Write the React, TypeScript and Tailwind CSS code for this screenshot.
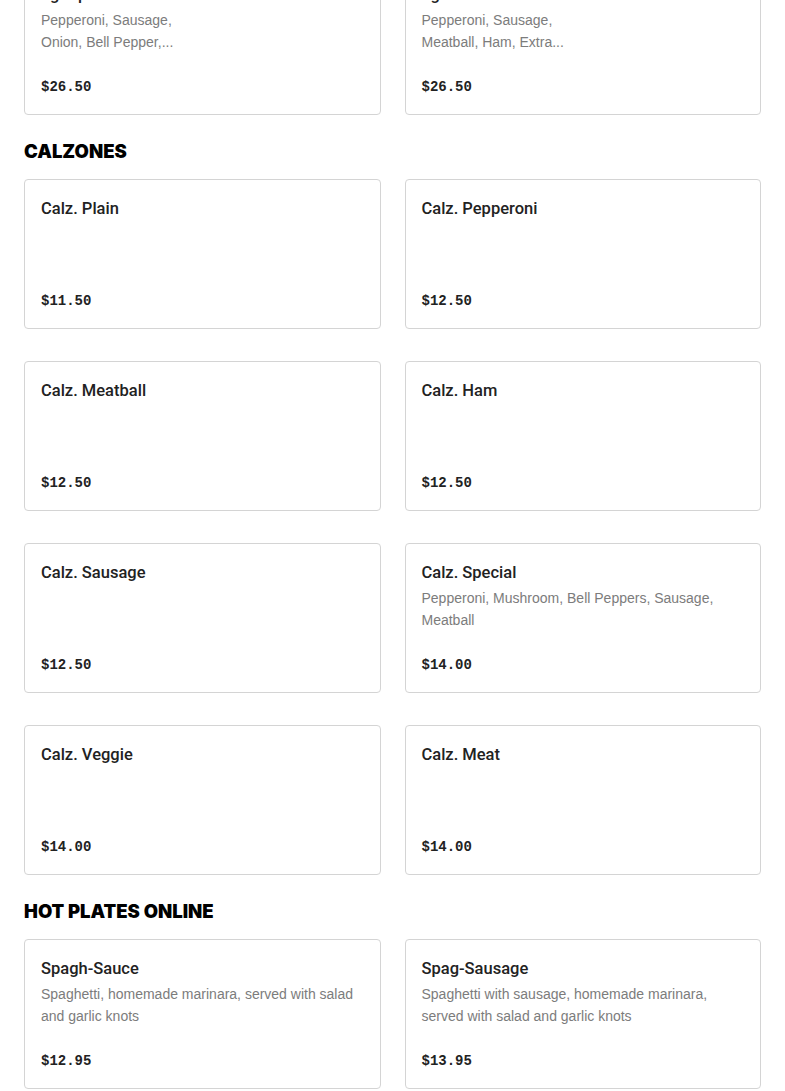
type Item = { name: string; desc?: string; price: string; lines?: string[] };

const topRow: Item[] = [
  { name: "Lg. Special", lines: ["Pepperoni, Sausage,", "Onion, Bell Pepper,..."], price: "$26.50" },
  { name: "Lg. Meat Lovers", lines: ["Pepperoni, Sausage,", "Meatball, Ham, Extra..."], price: "$26.50" },
];

const calzones: Item[] = [
  { name: "Calz. Plain", price: "$11.50" },
  { name: "Calz. Pepperoni", price: "$12.50" },
  { name: "Calz. Meatball", price: "$12.50" },
  { name: "Calz. Ham", price: "$12.50" },
  { name: "Calz. Sausage", price: "$12.50" },
  { name: "Calz. Special", desc: "Pepperoni, Mushroom, Bell Peppers, Sausage, Meatball", price: "$14.00" },
  { name: "Calz. Veggie", price: "$14.00" },
  { name: "Calz. Meat", price: "$14.00" },
];

const hotPlates: Item[] = [
  { name: "Spagh-Sauce", desc: "Spaghetti, homemade marinara, served with salad and garlic knots", price: "$12.95" },
  { name: "Spag-Sausage", desc: "Spaghetti with sausage, homemade marinara, served with salad and garlic knots", price: "$13.95" },
];

function Card({ item }: { item: Item }) {
  return (
    <div className="flex h-[150px] flex-col rounded border border-[#d4d4d4] bg-white px-4 pt-4 pb-[17px]">
      <div className="text-[16.5px] leading-[26px] font-medium text-[#222] font-['Roboto',sans-serif]">{item.name}</div>
      {item.desc && (
        <p className="mt-px text-sm leading-[22px] text-[#7c7c7c] font-['Liberation_Sans',sans-serif]">{item.desc}</p>
      )}
      {item.lines && (
        <p className="mt-px text-sm leading-[22px] text-[#7c7c7c] font-['Liberation_Sans',sans-serif]">
          {item.lines.map((l) => (
            <span key={l} className="block">{l}</span>
          ))}
        </p>
      )}
      <div className="mt-auto text-sm leading-5 font-bold text-[#222] font-['Liberation_Mono',monospace]">{item.price}</div>
    </div>
  );
}

function Grid({ items }: { items: Item[] }) {
  return (
    <div className="grid grid-cols-2 gap-x-6 gap-y-8">
      {items.map((item) => (
        <Card key={item.name} item={item} />
      ))}
    </div>
  );
}

function Heading({ children }: { children: string }) {
  return (
    <h2 className="mt-6 mb-4 text-[18.5px] leading-6 font-black text-black font-['Inter',sans-serif]">
      {children}
    </h2>
  );
}

export default function App() {
  return (
    <div className="min-h-screen bg-white px-6">
      <div className="mt-[-35px]">
        <Grid items={topRow} />
      </div>

      {/* Calzones */}
      <Heading>CALZONES</Heading>
      <Grid items={calzones} />

      {/* Hot plates */}
      <Heading>HOT PLATES ONLINE</Heading>
      <Grid items={hotPlates} />
      <div className="h-10" />
    </div>
  );
}
